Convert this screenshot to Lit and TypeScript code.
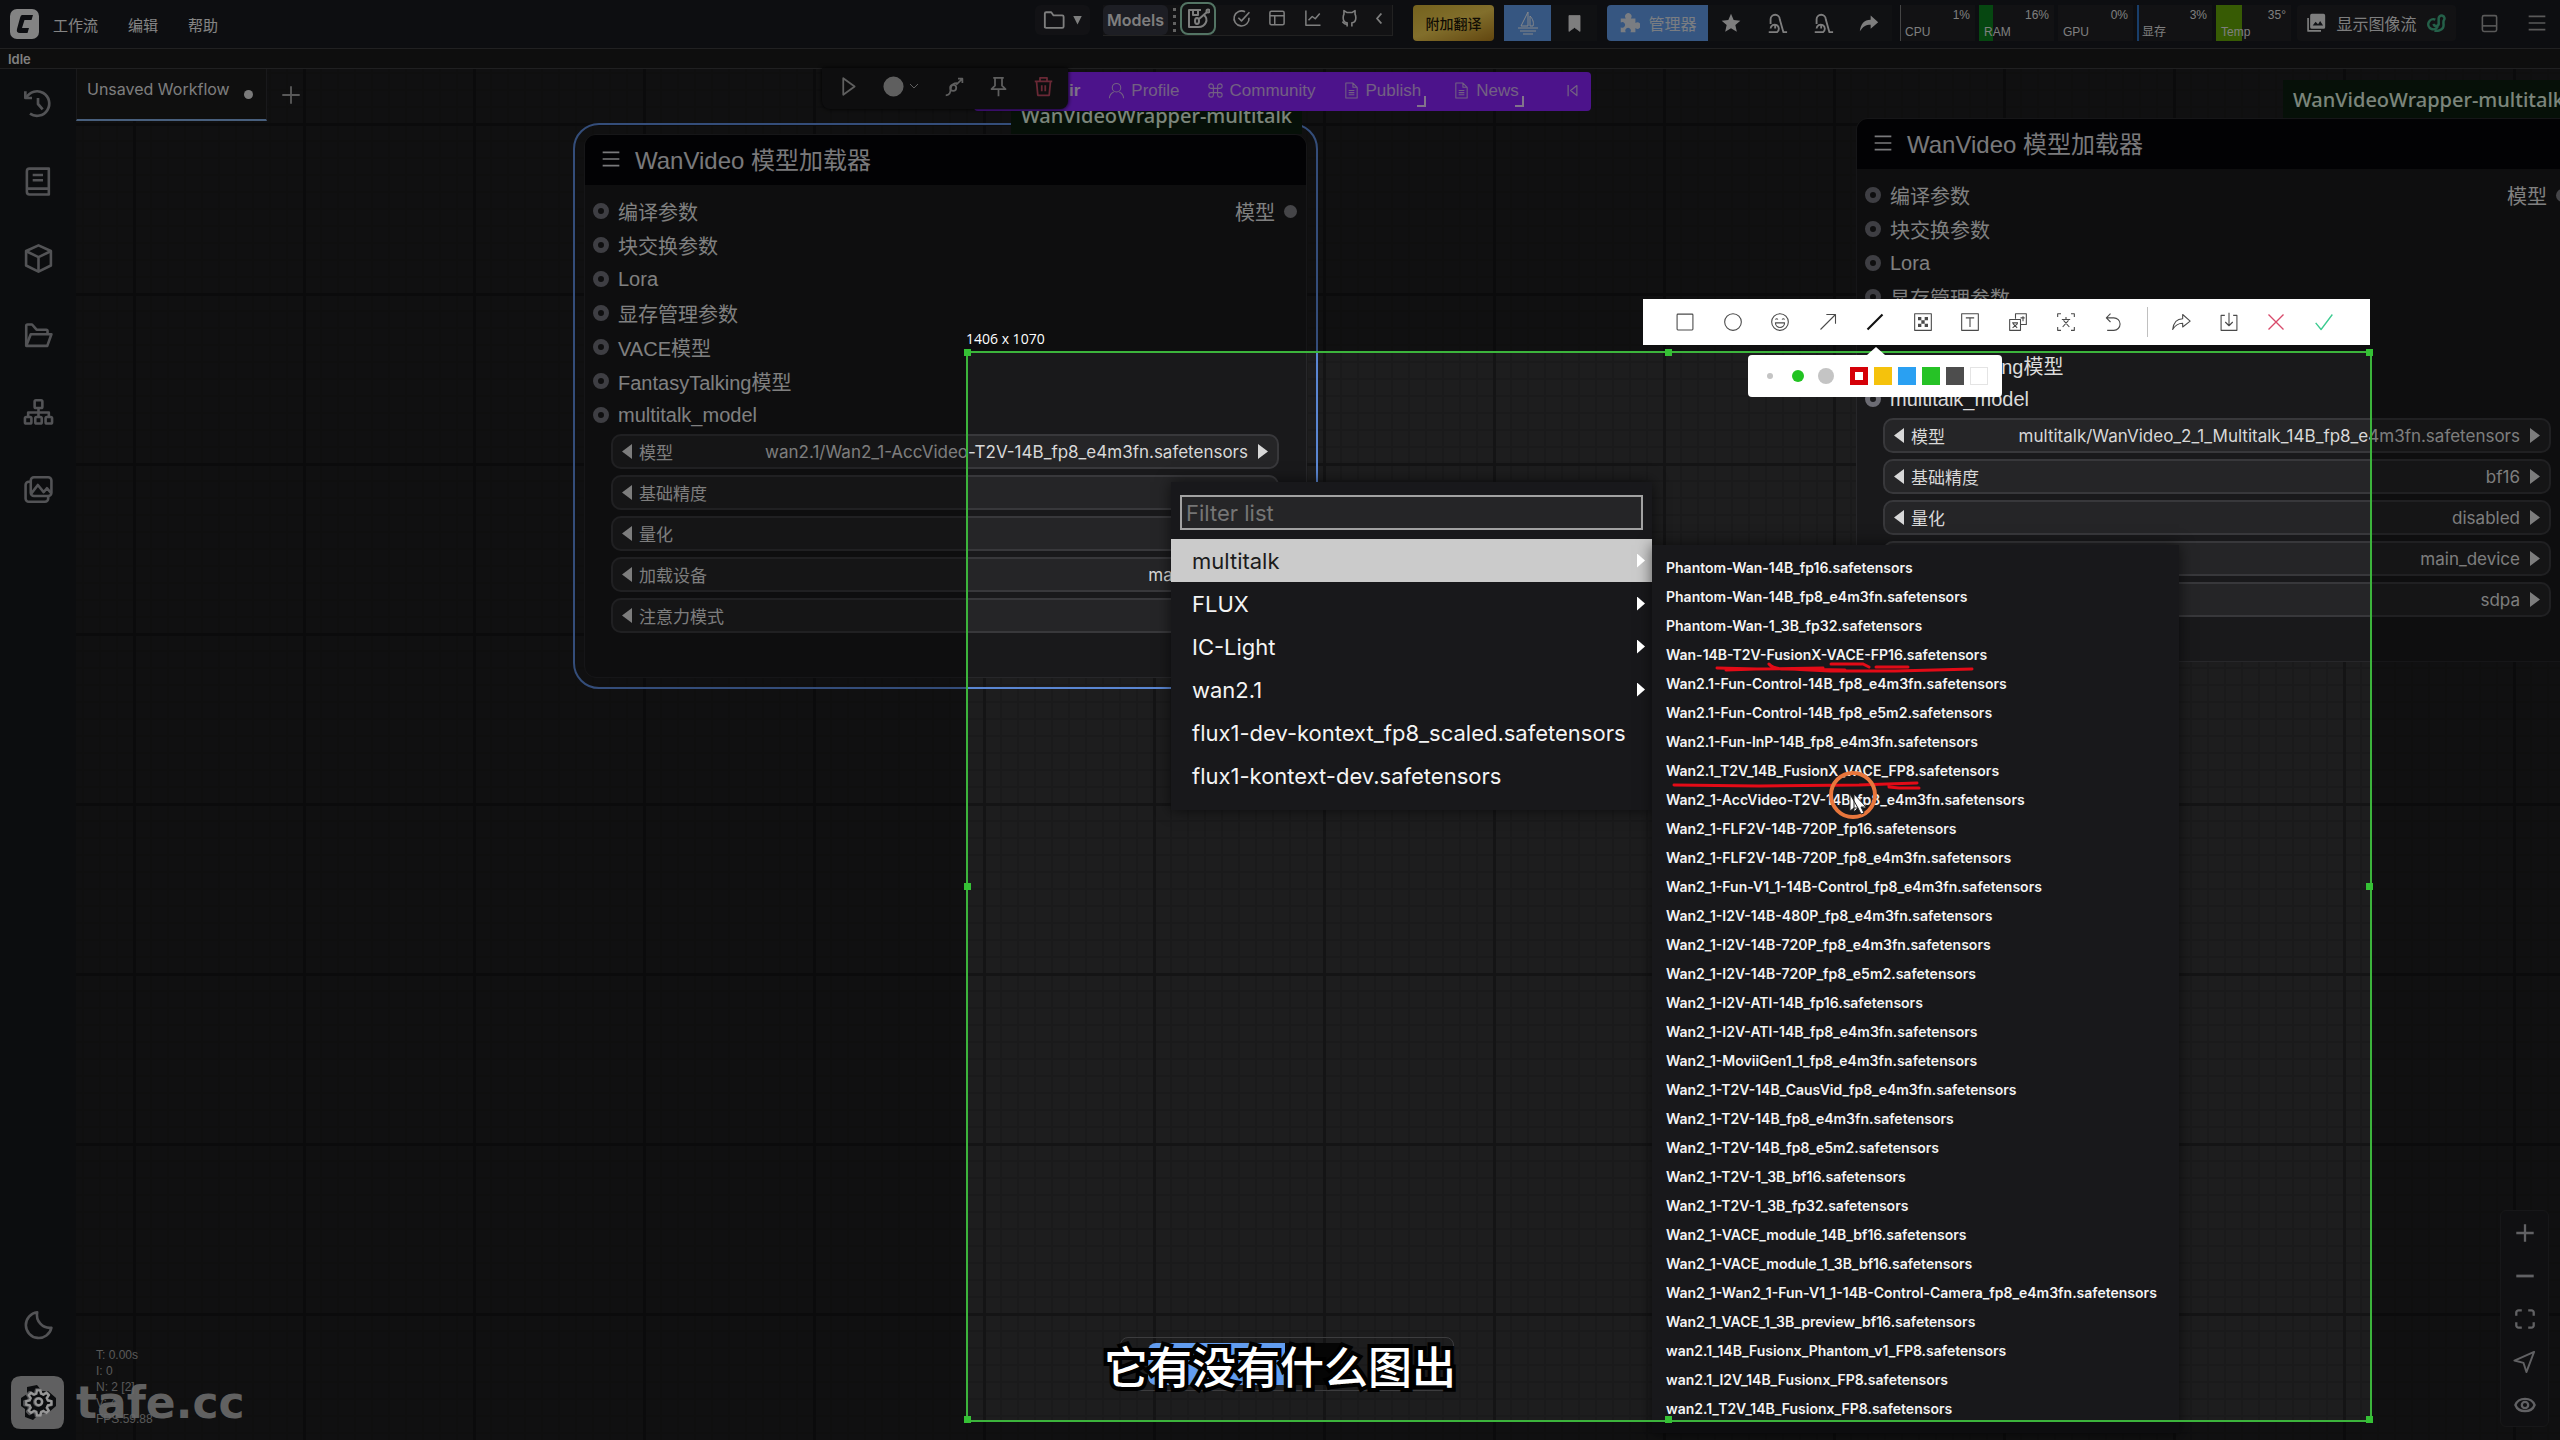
import { LitElement, html, svg, css } from "lit";
import { customElement, property } from "lit/decorators.js";

const ICONS: Record<string, unknown> = {
  history: svg`<path d="M2.5 2.5v5h5"/><path d="M3.2 7.2A9.2 9.2 0 1 1 6 19.2"/><path d="M12 7.5V12l3.5 4"/>`,
  book: svg`<path d="M5 2h15v20H5a2 2 0 0 1-2-2V4a2 2 0 0 1 2-2z"/><path d="M3 17.5h17M7.5 7h8M7.5 11h8"/>`,
  cube: svg`<path d="M12 1.8l9.6 4.4v11.2L12 22.2l-9.600-4.800V6.200z"/><path d="M2.600 6.400L12 11l9.400-4.600M12 11v11"/>`,
  folderOpen: svg`<path d="M2.500 20V4.500q0-1 1-1H7l3.500 4H18q1 0 1 1V11"/><path d="M2.500 20L6 11h16l-3.200 9z"/>`,
  sitemap: svg`<rect x="9" y="2.500" width="6" height="6" rx="1"/><rect x="1.500" y="15.500" width="5" height="5" rx="1"/><rect x="9.500" y="15.500" width="5" height="5" rx="1"/><rect x="17.500" y="15.500" width="5" height="5" rx="1"/><path d="M12 8.500v7M4 15.500V12h16v3.500"/>`,
  images: svg`<rect x="6" y="2.500" width="16" height="14.500" rx="2.500"/><path d="M6 6H4.500A2.500 2.500 0 0 0 2 8.500V19a2.500 2.500 0 0 0 2.500 2.500H17a2.500 2.500 0 0 0 2.500-2.500v-2"/><path d="M6.500 15l5-6.500L16 14l2.500-3 3 3.500"/>`,
  moon: svg`<path d="M11 2.500a10 10 0 1 0 11 12A10 10 0 0 1 11 2.500z"/>`,
  gear: svg`<circle cx="12" cy="12" r="3"/><path d="M10.500 2h3l.6 3 2 .9 2.600-1.700 2 2-1.700 2.600.9 2 3 .6v3l-3 .6-.9 2 1.700 2.600-2 2-2.600-1.700-2 .9-.6 3h-3l-.6-3-2-.9-2.600 1.700-2-2L5 17l-.9-2-3-.6v-3l3-.6.9-2-1.700-2.600 2-2L7.900 5.900l2-.9z"/>`,
  plus: svg`<path d="M12 2.500v19M2.500 12h19"/>`,
  minus: svg`<path d="M2.500 12h19"/>`,
  fit: svg`<path d="M2.500 8.500V5A2.500 2.500 0 0 1 5 2.500h3.500M15.500 2.500H19A2.500 2.500 0 0 1 21.500 5v3.500M21.500 15.500V19a2.500 2.500 0 0 1-2.500 2.500h-3.500M8.500 21.500H5A2.500 2.500 0 0 1 2.500 19v-3.500"/>`,
  send: svg`<path d="M22 2L1.500 11l9.500 2.500L14 23z"/>`,
  eye: svg`<path d="M1.500 12C5 3 19 3 22.500 12 19 21 5 21 1.500 12z"/><circle cx="12" cy="12" r="3.500"/>`,
  folder: svg`<path d="M2 20V5q0-1.500 1.500-1.500H9L11.500 7H21q1.500 0 1.500 1.500V19q0 1.500-1.500 1.500H3.500Q2 20.500 2 19z"/>`,
  saveEdit: svg`<path d="M15 3H3v17h9"/><path d="M7 3v5h5V3"/><ellipse cx="11" cy="14" rx="2" ry="3"/><path d="M12 20a8 7 0 0 0 6-12"/><path d="M13 12l8-7"/><circle cx="22" cy="4" r="1.500"/>`,
  check: svg`<path d="M21.500 11a9.500 9.500 0 1 1-5-7.500"/><path d="M8 11l4 4L22 4"/>`,
  layout: svg`<rect x="2.500" y="3" width="19" height="18" rx="2"/><path d="M2.500 9h19M9 9v12"/>`,
  chart: svg`<path d="M2.500 2v19.500H22"/><path d="M6 15l5-5 4 3 6-7"/>`,
  github: svg`<path d="M9 22v-4.500C5 17 4 14 4 11c0-2 .5-3.500 1-4.500L5 2l4 2.500h6L19 2v4.500c.5 1 1 2.500 1 4.500 0 3-1 6-5 6.500V22"/><path d="M9 19c-3 1-4-1-6-3"/>`,
  chevLeft: svg`<path d="M15 4l-7 8 7 8"/>`,
  chevDown: svg`<path d="M4 8l8 8 8-8"/>`,
  bookmark: svg`<path fill="currentColor" d="M5 2h14v20l-7-5-7 5z"/>`,
  ship: svg`<path d="M12 1L5 15h7zM14 5c3 3 4 7 3 10h-3zM2 17h20M4 20h16M7 23h10"/>`,
  puzzle: svg`<path fill="currentColor" stroke="none" d="M3 7h5.500A3.500 3.500 0 1 1 14 7h5v5a3.500 3.500 0 1 1 0 5.500V22h-5.500a3 3 0 1 0-5 0H3v-5.500a3 3 0 1 0 0-5z"/>`,
  star: svg`<path fill="currentColor" stroke="none" d="M12 1l3.200 7.500 8 .7-6 5.300 1.800 8-7-4.200-7 4.200 1.800-8-6-5.300 8-.7z"/>`,
  vacuum: svg`<path d="M3 22h9a4.500 4.500 0 1 0-7-4M5 13V8a5 5 0 0 1 10 0l4 14h4M10 14v4"/>`,
  share: svg`<path fill="currentColor" stroke="none" d="M14 3l9 8-9 8v-5C8 14 5 16 1 22 2 13 6 8 14 8z"/>`,
  gallery: svg`<rect x="6" y="2" width="16" height="16" rx="1" fill="currentColor"/><path d="M2.500 6v15.500H18"/><path d="M8 15l3.500-4.500 3 3 2.500-4 3.500 5.500z" fill="#202228" stroke="none"/>`,
  spiral: svg`<path d="M10 8a6 6 0 1 0 3 8M8 13a3 3 0 0 0 6-1V7a3.500 3.500 0 1 1 6 2c-1 4 1 6-1 9-2 3-7 4-10 3"/>`,
  panel: svg`<rect x="3" y="2" width="18" height="20" rx="2"/><path d="M3 15h18"/>`,
  menu: svg`<path d="M2 4h20M2 12h20M2 20h20"/>`,
  play: svg`<path d="M6 2.500l13 9.500L6 21.500z"/>`,
  circle: svg`<circle cx="12" cy="12" r="10.500" fill="currentColor"/>`,
  route: svg`<path d="M2 22c6 0 5-5 6-9s4-5 7-5"/><circle cx="10.500" cy="13.500" r="3.500"/><path d="M14 10l7-7M16 3h5v5"/>`,
  pin: svg`<path d="M6 2h12M8 2v9l-4 4h16l-4-4V2M12 15v8"/>`,
  trash: svg`<path d="M2 6h20M8 6V2h8v4M4 6l1.500 16h13L20 6M10 10.500v7M14 10.500v7"/>`,
  person: svg`<circle cx="12" cy="8" r="6"/><path d="M2 23c0-5 3-7.500 6-9M22 23c0-5-3-7.500-6-9"/>`,
  command: svg`<path d="M9 9V5.500A3.200 3.200 0 1 0 5.500 9h13A3.200 3.200 0 1 0 15 5.500v13a3.200 3.200 0 1 0 3.500-3.500h-13A3.200 3.200 0 1 0 9 18.500z"/>`,
  doc: svg`<path d="M4 1.500h10l6 6v15H4zM14 1.500v6h6M8 12h8M8 15h8M8 18h8"/>`,
  collapse: svg`<path d="M5 3v18M19 4l-10 8 10 8z"/>`,
  rect: svg`<rect x="2.500" y="2.500" width="19" height="19" rx="1"/>`,
  ring: svg`<circle cx="12" cy="12" r="10"/>`,
  smile: svg`<circle cx="12" cy="12" r="10"/><path d="M6.500 13h11a5.500 5.500 0 0 1-11 0zM6.500 9q1.500-2 3 0M14.500 9q1.500-2 3 0"/>`,
  arrow: svg`<path d="M3 21L21 3M10 3h11v11"/>`,
  pen: svg`<path stroke-width="2.500" d="M3 21L21 3"/>`,
  mosaic: svg`<rect x="2" y="2" width="20" height="20"/><path fill="currentColor" stroke="none" d="M6 6h4v4H6zM14 6h4v4h-4zM10 10h4v4h-4zM6 14h4v4H6zM14 14h4v4h-4z"/>`,
  textbox: svg`<rect x="2" y="2" width="20" height="20"/><path d="M7 7h10M12 7v11"/>`,
  translate: svg`<path d="M9 8V2h13v13h-7M2 9h13v13H2zM5 13h7M5.500 19l6-5M6 14l5 5M18 5v6M15 7h5"/>`,
  ocr: svg`<path d="M2 6V2h4M18 2h4v4M22 18v4h-4M6 22H2v-4M7 9h10M12 6v3M8 18l7-8M9 10l7 8"/>`,
  undo: svg`<path d="M9 2L4 7l5 5M4 7h9a7.500 7.500 0 0 1 0 15H5"/>`,
  forward: svg`<path d="M14 3l9 8-9 7v-4.500C8 13.500 5 16 2 21 3 13 7 8 14 8z"/>`,
  download: svg`<path d="M7 4H2.500v18h19V4H17M12 1v15M7.500 12l4.500 4.500 4.500-4.500"/>`,
  close: svg`<path d="M3 3l18 18M21 3L3 21"/>`,
  tick: svg`<path d="M2 13l6.500 8L22 3"/>`,
};

const glyph = (name: string, size = 24, weight = 2) => svg`
  <svg width=${size} height=${size} viewBox="0 0 24 24" fill="none" stroke="currentColor"
    stroke-width=${weight} stroke-linejoin="round" stroke-linecap="butt" aria-hidden="true">${ICONS[name]}</svg>`;

const iconButton = (name: string, label: string, size = 24, weight = 2, cls = "") =>
  html`<button class="ib ${cls}" aria-label=${label}>${glyph(name, size, weight)}</button>`;

const baseStyles = css`
  * { box-sizing: border-box; }
  button {
    margin: 0; padding: 0; border: 0; background: none; color: inherit;
    font: inherit; display: flex; align-items: center; justify-content: center;
    white-space: nowrap; flex: none;
  }
  svg { display: block; flex: none; }
`;

@customElement("graph-node")
class GraphNode extends LitElement {
  @property() model = "";
  @property({ type: Boolean, reflect: true }) selected = false;

  static styles = [baseStyles, css`
    :host { display: block; width: 723px; }
    :host([selected])::before {
      content: ""; position: absolute; inset: -11px; border: 2px solid #5a86d2; border-radius: 26px;
    }
    .badge {
      position: absolute; right: 5px; bottom: 100%; height: 38px; padding: 0 10px;
      display: flex; align-items: center; background: #0c1d0f; color: #d6e6d6;
      font: 500 20px "Noto Sans", sans-serif; white-space: nowrap;
    }
    .frame { position: relative; border: 1px solid #27272a; border-radius: 12px; background: #19191b; overflow: hidden; }
    .title {
      display: flex; align-items: center; gap: 14px; height: 50px; padding: 0 0 3px 16px;
      background: #050508; color: #d0d0d4; font: 24px "Liberation Sans", "Noto Sans CJK SC", sans-serif;
    }
    .slots {
      display: flex; justify-content: space-between; padding: 9px 9px 0 8px;
      font: 20px "Liberation Sans", "Noto Sans CJK SC", sans-serif; color: #dcdcdc;
    }
    .slot { display: flex; align-items: center; gap: 9px; height: 34px; }
    .in { width: 16px; height: 16px; border-radius: 50%; border: 5px solid #6c6c74; }
    .out { width: 13px; height: 13px; border-radius: 50%; background: #77777c; }
    .widgets { display: flex; flex-direction: column; gap: 6px; padding: 2px 27px 44px 26px; }
    .widget {
      display: flex; align-items: center; height: 35px; padding: 0 9px; gap: 7px;
      border: 2px solid #38383b; border-radius: 10px; background: #252527;
      font-size: 17px; color: #d8d8d8;
    }
    .value { margin-left: auto; padding-right: 3px; }
    .prev, .next { width: 10px; height: 15px; background: currentColor; }
    .prev { clip-path: polygon(0 50%, 100% 0, 100% 100%); }
    .next { clip-path: polygon(0 0, 100% 50%, 0 100%); }
  `];

  render() {
    const inputs = ["编译参数", "块交换参数", "Lora", "显存管理参数", "VACE模型", "FantasyTalking模型", "multitalk_model"];
    const widgets = [["模型", this.model], ["基础精度", "bf16"], ["量化", "disabled"], ["加载设备", "main_device"], ["注意力模式", "sdpa"]];
    return html`
      <div class="badge">WanVideoWrapper-multitalk</div>
      <div class="frame">
        <div class="title">${glyph("menu", 20, 2)}<span>WanVideo 模型加载器</span></div>
        <div class="slots">
          <div>${inputs.map((n) => html`<div class="slot"><i class="in"></i>${n}</div>`)}</div>
          <div class="slot">模型<i class="out"></i></div>
        </div>
        <div class="widgets">
          ${widgets.map(([label, value]) => html`
            <div class="widget">
              <button class="prev" aria-label="${label} previous"></button><span>${label}</span>
              <span class="value">${value}</span><button class="next" aria-label="${label} next"></button>
            </div>`)}
        </div>
      </div>`;
  }
}

const FILES = [
  "Phantom-Wan-14B_fp16", "Phantom-Wan-14B_fp8_e4m3fn", "Phantom-Wan-1_3B_fp32", "Wan-14B-T2V-FusionX-VACE-FP16",
  "Wan2.1-Fun-Control-14B_fp8_e4m3fn", "Wan2.1-Fun-Control-14B_fp8_e5m2", "Wan2.1-Fun-InP-14B_fp8_e4m3fn",
  "Wan2.1_T2V_14B_FusionX_VACE_FP8", "Wan2_1-AccVideo-T2V-14B_fp8_e4m3fn", "Wan2_1-FLF2V-14B-720P_fp16",
  "Wan2_1-FLF2V-14B-720P_fp8_e4m3fn", "Wan2_1-Fun-V1_1-14B-Control_fp8_e4m3fn", "Wan2_1-I2V-14B-480P_fp8_e4m3fn",
  "Wan2_1-I2V-14B-720P_fp8_e4m3fn", "Wan2_1-I2V-14B-720P_fp8_e5m2", "Wan2_1-I2V-ATI-14B_fp16",
  "Wan2_1-I2V-ATI-14B_fp8_e4m3fn", "Wan2_1-MoviiGen1_1_fp8_e4m3fn", "Wan2_1-T2V-14B_CausVid_fp8_e4m3fn",
  "Wan2_1-T2V-14B_fp8_e4m3fn", "Wan2_1-T2V-14B_fp8_e5m2", "Wan2_1-T2V-1_3B_bf16", "Wan2_1-T2V-1_3B_fp32",
  "Wan2_1-VACE_module_14B_bf16", "Wan2_1-VACE_module_1_3B_bf16",
  "Wan2_1-Wan2_1-Fun-V1_1-14B-Control-Camera_fp8_e4m3fn", "Wan2_1_VACE_1_3B_preview_bf16",
  "wan2.1_14B_Fusionx_Phantom_v1_FP8", "wan2.1_I2V_14B_Fusionx_FP8", "wan2.1_T2V_14B_Fusionx_FP8",
];

@customElement("model-menu")
class ModelMenu extends LitElement {
  static styles = [baseStyles, css`
    :host { display: flex; align-items: flex-start; color: #f4f4f4; }
    .menu { width: 481px; padding: 13px 0; background: #18181b; box-shadow: 0 0 14px #0009; }
    input {
      display: block; width: 463px; height: 35px; margin: 0 9px 9px; padding: 0 4px; border: 2px solid #a2a2a2;
      border-radius: 0; background: #252527; color: #eee; font: inherit; font-size: 22px; outline: none;
    }
    input::placeholder { color: #757575; opacity: 1; }
    .item { width: 100%; height: 43px; padding: 0 7px 0 21px; justify-content: space-between; font-size: 22px; }
    .item.on { background: #cbcbcb; color: #1c1c1c; }
    .more { width: 8px; height: 14px; background: #fff; clip-path: polygon(0 0, 100% 50%, 0 100%); }
    .sub { width: 527px; margin-top: 63px; padding: 8px 0 10px; background: #18181b; box-shadow: 0 0 14px #0009; }
    .file { width: 100%; height: 29px; padding-left: 14px; justify-content: flex-start; font-size: 14px; font-weight: 600; }
  `];

  render() {
    const items: [string, boolean][] = [["multitalk", true], ["FLUX", true], ["IC-Light", true], ["wan2.1", true],
      ["flux1-dev-kontext_fp8_scaled.safetensors", false], ["flux1-kontext-dev.safetensors", false]];
    return html`
      <div class="menu" role="menu">
        <input type="text" placeholder="Filter list" aria-label="Filter list">
        ${items.map(([n, more], i) => html`<button role="menuitem" class="item ${i === 0 ? "on" : ""}">${n}${more ? html`<i class="more"></i>` : ""}</button>`)}
      </div>
      <div class="sub" role="menu">
        ${FILES.map((f) => html`<button role="menuitem" class="file">${f}.safetensors</button>`)}
      </div>`;
  }
}

@customElement("app-root")
class AppRoot extends LitElement {
  static styles = [baseStyles, css`
    :host {
      display: flex; flex-direction: column; position: relative; height: 100vh; overflow: hidden;
      font-family: Inter, "Noto Sans CJK SC", sans-serif; color: #d4d4d4; background: #1d1d1e;
    }
    .canvas {
      position: absolute; inset: 0; background-color: #1d1d1e;
      background-image: linear-gradient(90deg, #141415 3px, transparent 3px), linear-gradient(#141415 3px, transparent 3px),
        linear-gradient(90deg, #1a1a1b 2px, transparent 2px), linear-gradient(#1a1a1b 2px, transparent 2px);
      background-size: 170px 170px, 170px 170px, 17px 17px, 17px 17px;
      background-position: 133px 0, 0 123px, 14px 0, 0 4px;
    }
    .node-a, .node-b, .popup { position: absolute; }
    .node-a { left: 584px; top: 134px; }
    .node-b { left: 1856px; top: 118px; }
    .popup { left: 1171px; top: 482px; }
    .queue {
      position: absolute; left: 1120px; top: 1337px; display: flex; width: 334px; height: 54px; padding: 5px 0 5px 27px;
      border: 1px solid #3c3c3e; border-radius: 8px;
    }
    .queue .run { width: 137px; border-radius: 8px 0 0 8px; background: #629df0; }
    .queue .opt { width: 56px; background: #050505; }

    .top { position: relative; display: flex; align-items: flex-start; height: 49px; border-bottom: 1px solid #3a3a3c; background: #17191e; }
    .brand { display: flex; align-items: center; gap: 30px; padding: 9px 0 0 10px; font-size: 15px; color: #e4e4e4; }
    .brand svg { margin-right: -16px; }
    .tools { display: flex; align-items: flex-start; margin-left: auto; padding-top: 5px; color: #dadada; }
    .chip { height: 30px; border-radius: 6px; background: #1f2025; }
    .picker { width: 55px; gap: 8px; margin-right: 13px; }
    .caret { width: 9px; height: 9px; background: currentColor; clip-path: polygon(0 0, 100% 0, 50% 100%); }
    .strip { display: flex; height: 31px; margin-right: 20px; border-bottom: 1px solid #3c3c3c; border-right: 1px solid #3c3c3c; background: #1f2023; }
    .models { width: 65px; font-size: 16px; font-weight: 600; border-radius: 6px; background: #33343f; }
    .grip { width: 12px; display: flex; flex-direction: column; align-items: center; justify-content: center; gap: 4px; }
    .grip i { width: 3px; height: 3px; background: #aaa; }
    .boxed { width: 36px; height: 33px; margin: -3px 7px 0 0; border: 2px solid #8fc9ac; border-radius: 8px; }
    .strip .ib { width: 36px; height: 26px; }
    .strip .fold { width: 25px; }
    .gold, .blue, .dark, .flow { height: 36px; }
    .gold { width: 81px; margin-right: 10px; border-radius: 4px; background: linear-gradient(160deg, #c9a934, #e0bf4c 50%, #a8791c); color: #1c1608; font-size: 14px; font-weight: 500; }
    .blue { width: 47px; background: #5e94de; color: #e4e8ee; }
    .manager { width: 101px; gap: 8px; margin-left: 10px; border-radius: 4px 0 0 4px; font-size: 16px; color: #d2d8e0; }
    .dark { width: 46px; background: #1d1e22; }
    .meters { display: flex; gap: 4px; margin: 0 6px 0 8px; }
    .meter {
      position: relative; width: 75px; height: 36px; padding: 2px 5px 1px; display: grid; align-content: space-between;
      background: #1f2024; font: 12px/16px "Liberation Sans", "Noto Sans CJK SC", sans-serif;
    }
    .meter b { position: absolute; left: 0; top: 0; height: 100%; }
    .meter span { position: relative; }
    .pct { justify-self: end; }
    .flow { width: 159px; gap: 10px; background: #1f2024; border-radius: 4px; font-size: 16px; }
    .teal { color: #3fa67e; display: flex; }
    .dim { width: 47px; height: 36px; margin-left: 10px; color: #999; }
    .dim + .dim { margin: 0; }
    .status { position: relative; height: 20px; padding-left: 8px; border-bottom: 1px solid #38383a; background: #191919; font-size: 13px; line-height: 20px; font-weight: 600; color: #ddd; }

    .body { position: relative; flex: 1; display: flex; align-items: stretch; min-height: 0; }
    .side { display: flex; flex-direction: column; width: 76px; background: #15171a; color: #8f9094; }
    .side .ib { width: 100%; height: 77px; padding-bottom: 7px; }
    .side .low { padding: 0; }
    .side .moon { margin-top: auto; }
    .work { position: relative; flex: 1; }
    .tabs { display: flex; align-items: flex-start; }
    .tab {
      gap: 14px; height: 52px; width: 191px; padding: 0 0 10px 10px; justify-content: flex-start; border: solid #2c2c30;
      border-width: 0 1px 2px; border-bottom-color: #7ca4d8; background: #1a1a1b; font-size: 16px; color: #d8d8d8;
    }
    .tab i { width: 9px; height: 9px; margin-top: 10px; border-radius: 50%; background: #d4d4d4; }
    .add { width: 48px; height: 52px; color: #9a9a9a; }
    .stats { position: absolute; left: 20px; bottom: 13px; font: 12px/16px "Liberation Sans", sans-serif; color: #9a9a9a; }
    .zoom { position: absolute; right: 11px; bottom: 13px; width: 49px; display: flex; flex-direction: column; border: 1px solid #29292b; border-radius: 6px; background: #1c1c1f; color: #a8a8ac; }
    .zoom .ib { height: 43px; }

    .purple { position: absolute; left: 974px; top: 72px; display: flex; align-items: center; width: 617px; height: 39px; padding: 0 11px 2px 95px; border-radius: 4px; background: #8322f0; font: 17px "Liberation Sans", sans-serif; color: #c5a6e0; }
    .purple b { color: #d8c4ea; margin-right: 28px; font-weight: 700; }
    .purple button { gap: 6px; margin-right: 27px; }
    .corner::after { content: ""; width: 7px; height: 9px; margin: 22px 0 0 -10px; border: solid #e0c8f0; border-width: 0 2px 2px 0; }
    .purple .last { margin: 0 0 0 auto; }
    .float { position: absolute; left: 822px; top: 68px; display: flex; align-items: center; width: 246px; height: 41px; padding: 0 14px 5px 16px; justify-content: space-between; border-radius: 0 0 8px 8px; background: #19191b; color: #a4a4a4; box-shadow: 0 0 4px #000; }
    .float .ib { height: 30px; }
    .float .pair { gap: 4px; }
    .float .red { color: #b5465c; }

    .shot { position: absolute; left: 966px; top: 351px; width: 1406px; height: 1071px; border: 2px solid #3cb43c; box-shadow: 0 0 0 4000px rgba(0, 0, 0, 0.42); }
    .shot i { position: absolute; width: 7px; height: 7px; margin: -4px; background: #35c135; }
    .n { top: 0; } .s { top: 100%; } .m { top: 50%; }
    .w { left: 0; } .e { left: 100%; } .c { left: 50%; }
    .size { position: absolute; left: 966px; top: 329px; font: 14px/20px "Open Sans", sans-serif; color: #fff; }
    .snip { position: absolute; left: 1643px; top: 299px; display: flex; align-items: center; width: 727px; height: 46px; padding: 0 24px 0 20px; justify-content: space-between; background: #fff; color: #4a4a4a; }
    .snip .ib { width: 44px; height: 46px; }
    .snip hr { width: 1px; height: 30px; margin: 0 8px; border: 0; background: #c0c0c0; }
    .snip .ink { color: #111; } .snip .no { color: #d84a6a; } .snip .ok { color: #3ccb90; }
    .palette { position: absolute; left: 1748px; top: 355px; display: flex; align-items: center; gap: 6px; width: 254px; height: 42px; padding: 0 13px 0 19px; border-radius: 4px; background: #fff; }
    .palette::before { content: ""; position: absolute; left: 119px; top: -8px; border: solid transparent; border-width: 0 9px 8px; border-bottom-color: #fff; }
    .dot { border-radius: 50%; background: #c4c4c4; }
    .d1 { width: 6px; height: 6px; margin-right: 13px; } .d2 { width: 12px; height: 12px; background: #22c322; margin-right: 8px; } .d3 { width: 16px; height: 16px; margin-right: 10px; }
    .sw { width: 18px; height: 18px; }
    .c1 { border: 5px solid #d50008; background: #fff; } .c2 { background: #f5c20c; } .c3 { background: #2aa0f2; }
    .c4 { background: #26c226; } .c5 { background: #4d4d4d; } .c6 { border: 1px solid #e4e4e4; }
    .ink-layer { position: absolute; left: 1660px; top: 640px; }
    .mark { position: absolute; left: 11px; bottom: 11px; display: flex; align-items: center; gap: 12px; font: 700 44px/53px "DejaVu Sans", sans-serif; color: #6a6a6a; opacity: .9; }
    .caption {
      position: absolute; left: 1104px; top: 1332px; margin: 0; color: #fff;
      font: 500 44px/66px "Noto Sans CJK SC", sans-serif; white-space: nowrap;
      -webkit-text-stroke: 8px #000; paint-order: stroke fill;
    }
  `];

  render() {
    const meters: [string, string, number, string][] = [["CPU", "1%", 1, "#777"], ["RAM", "16%", 18, "#0b7a1e"],
      ["GPU", "0%", 0, "#777"], ["显存", "3%", 3, "#2a6cb8"], ["Temp", "35°", 34, "#5f9e08"]];
    return html`
      <div class="canvas">
        <graph-node class="node-a" selected model="wan2.1/Wan2_1-AccVideo-T2V-14B_fp8_e4m3fn.safetensors"></graph-node>
        <graph-node class="node-b" model="multitalk/WanVideo_2_1_Multitalk_14B_fp8_e4m3fn.safetensors"></graph-node>
        <div class="queue"><button class="run" aria-label="Run"></button><button class="opt" aria-label="Run options"></button></div>
      </div>

      <header class="top">
        <nav class="brand">
          <svg width="29" height="30" viewBox="0 0 29 30" aria-hidden="true"><rect width="29" height="30" rx="7" fill="#e2e2e2"/>
            <path fill="#17191e" d="M12 6h11l-1.500 5h-7l-2.500 8h7l-1.500 5H10q-4 0-3-4l3-11q.7-3 2-3z"/></svg>
          <button>工作流</button><button>编辑</button><button>帮助</button>
        </nav>
        <div class="tools">
          <button class="chip picker" aria-label="Folders">${glyph("folder", 22)}<i class="caret"></i></button>
          <div class="strip">
            <button class="models">Models</button>
            <span class="grip"><i></i><i></i><i></i><i></i></span>
            <button class="boxed" aria-label="Save">${glyph("saveEdit", 24, 2)}</button>
            ${iconButton("check", "Check", 19)}${iconButton("layout", "Layout", 18)}
            ${iconButton("chart", "Chart", 18)}${iconButton("github", "GitHub", 19)}
            ${iconButton("chevLeft", "Collapse", 15, 3, "fold")}
          </div>
          <button class="gold">附加翻译</button>
          <button class="blue" aria-label="Sail">${glyph("ship", 24, 1)}</button>
          ${iconButton("bookmark", "Bookmark", 19, 1, "dark")}
          <button class="blue manager">${glyph("puzzle", 22)}管理器</button>
          ${iconButton("star", "Favorite", 20, 1, "dark")}${iconButton("vacuum", "Unload models", 22, 2, "dark")}
          ${iconButton("vacuum", "Free cache", 22, 2, "dark")}${iconButton("share", "Share", 20, 1, "dark")}
          <div class="meters">
            ${meters.map(([n, v, w, c]) => html`<div class="meter"><b style="width:${w}%;background:${c}"></b><span class="pct">${v}</span><span>${n}</span></div>`)}
          </div>
          <button class="flow">${glyph("gallery", 20)}显示图像流<span class="teal">${glyph("spiral", 20, 3)}</span></button>
          ${iconButton("panel", "Panel", 19, 2, "dim")}${iconButton("menu", "Menu", 20, 2, "dim")}
        </div>
      </header>
      <div class="status">Idle</div>

      <div class="body">
        <aside class="side">
          ${iconButton("history", "Queue", 32)}${iconButton("book", "Nodes", 31)}${iconButton("cube", "Models", 31)}
          ${iconButton("folderOpen", "Workflows", 31)}${iconButton("sitemap", "Graph", 31)}${iconButton("images", "Gallery", 31)}
          ${iconButton("moon", "Theme", 31, 2, "low moon")}${iconButton("gear", "Settings", 30, 2, "low")}
        </aside>
        <main class="work">
          <div class="tabs">
            <button class="tab">Unsaved Workflow<i></i></button>
            ${iconButton("plus", "New tab", 22, 2, "add")}
          </div>
          <div class="stats">T: 0.00s<br>I: 0<br>N: 2 [2]<br>V: 4<br>FPS:59.88</div>
          <div class="zoom">
            ${iconButton("plus", "Zoom in", 22, 2.5)}${iconButton("minus", "Zoom out", 22, 3)}${iconButton("fit", "Fit view", 22, 2.5)}
            ${iconButton("send", "Pan", 23, 2)}${iconButton("eye", "Toggle links", 22, 2.5)}
          </div>
        </main>
      </div>

      <div class="purple">
        <b>ir</b>
        <button>${glyph("person", 17, 1.5)}Profile</button><button>${glyph("command", 17, 1.5)}Community</button>
        <button class="corner">${glyph("doc", 17, 1.5)}Publish</button><button class="corner">${glyph("doc", 17, 1.5)}News</button>
        <button class="last" aria-label="Hide bar">${glyph("collapse", 15, 2)}</button>
      </div>
      <div class="float">
        ${iconButton("play", "Run node", 21)}
        <button class="ib pair" aria-label="Color">${glyph("circle", 21)}${glyph("chevDown", 12, 2)}</button>
        ${iconButton("route", "Bypass", 21)}${iconButton("pin", "Pin", 21)}${iconButton("trash", "Delete", 21, 2, "red")}
      </div>

      <model-menu class="popup"></model-menu>

      <div class="shot">
        <i class="n w"></i><i class="n c"></i><i class="n e"></i><i class="m w"></i><i class="m e"></i>
        <i class="s w"></i><i class="s c"></i><i class="s e"></i>
      </div>
      <div class="size">1406 x 1070</div>
      <div class="snip" role="toolbar">
        ${["rect", "ring", "smile", "arrow"].map((n) => iconButton(n, n, 20, 1.3))}
        ${iconButton("pen", "pen", 20, 2, "ink")}
        ${["mosaic", "textbox", "translate", "ocr", "undo"].map((n) => iconButton(n, n, 20, 1.3))}
        <hr>
        ${iconButton("forward", "share", 20, 1.3)}${iconButton("download", "save", 20, 1.3)}
        ${iconButton("close", "cancel", 20, 1.6, "no")}${iconButton("tick", "done", 20, 1.6, "ok")}
      </div>
      <div class="palette">
        <button class="dot d1" aria-label="Thin"></button><button class="dot d2" aria-label="Medium"></button><button class="dot d3" aria-label="Thick"></button>
        ${["red", "yellow", "blue", "green", "gray", "white"].map((c, i) => html`<button class="sw c${i + 1}" aria-label=${c}></button>`)}
      </div>
      <svg class="ink-layer" width="330" height="190" viewBox="1660 640 330 190" fill="none" aria-hidden="true">
        <g stroke="#e30b17" stroke-width="3" stroke-linecap="round">
          <path d="M1717 668l40 1 66-1M1726 670l30-1M1769 664q4 5 16 5l60 1M1790 669l40 2h65l40-1 37-1M1831 664h32l6 3M1876 667h32"/>
          <path d="M1674 785l85 1 100-1 28-1 30-1M1889 787l10 1 20 0M1889 784v3"/>
        </g>
        <circle cx="1853" cy="795" r="22" stroke="#e8763c" stroke-width="4"/>
        <path fill="#fff" stroke="#222" d="M1850 794v17l4-3 4 0zM1854 794v18l4-4 3 6 3-1-3-6h5z"/>
      </svg>
      <div class="mark">
        <svg width="53" height="53" viewBox="0 0 53 53" aria-hidden="true"><path fill="currentColor" fill-rule="evenodd"
          d="M10 0h33q10 0 10 10v33q0 10-10 10H10Q0 53 0 43V10Q0 0 10 0zM16 11v7l-6 4v8l4 3v8l8 3 6-6h8l9-8v-8l-8-7h-6l-5-6z"/>
          <g transform="translate(14 12) scale(1.15)" fill="none" stroke="#a0a0a0" stroke-width="2">${ICONS.gear}</g></svg>
        tafe.cc
      </div>
      <p class="caption">它有没有什么图出</p>
    `;
  }
}
